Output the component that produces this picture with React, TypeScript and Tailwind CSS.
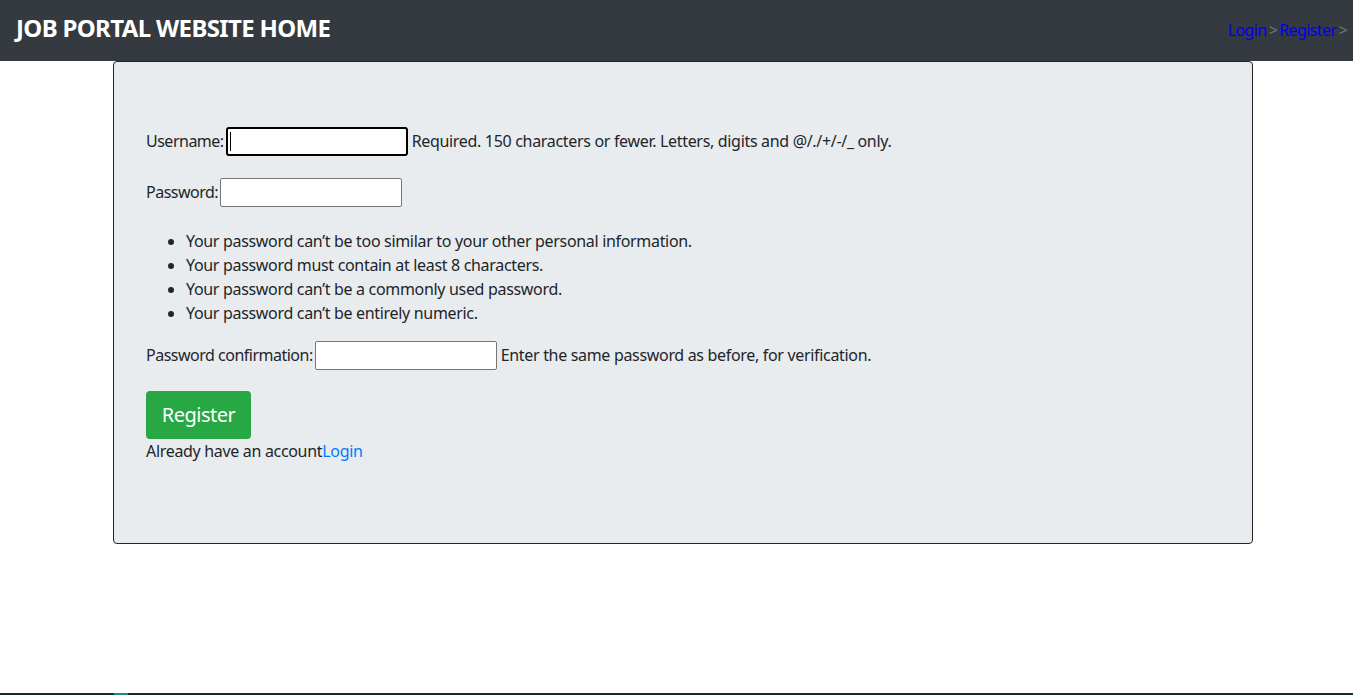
export default function App() {
  const font = { fontFamily: '"Noto Sans", "Open Sans", sans-serif' };
  return (
    <div className="relative min-h-[695px] w-full bg-white text-[16px] tracking-[-0.32px] text-[#212529]" style={font}>
      <nav className="flex h-[61px] items-center justify-between bg-[#343a40] pl-4 pr-[6px]">
        <span className="pb-[5px] text-[24px] font-bold leading-none tracking-[-0.65px] text-white">JOB PORTAL WEBSITE HOME</span>
        <div className="flex items-center pb-[2px] text-[16px] tracking-[-0.6px] text-[#0000ee]">
          <a href="#">Login</a>
          <span className="px-[2px] text-[#6c757d]">&gt;</span>
          <a href="#">Register</a>
          <span className="pl-[2px] text-[#6c757d]">&gt;</span>
        </div>
      </nav>

      <div className="ml-[113px] h-[483px] w-[1140px] rounded border border-[#212529] bg-[#e9ecef] px-8 pt-16">
        <form>
          <div className="flex h-[30px] items-center gap-[2px]">
            <label className="tracking-[-0.5px]">Username:</label>
            <div className="flex h-[29px] w-[182px] items-center rounded-[3px] border-2 border-black bg-white pl-[2px]">
              <span className="h-[19px] w-px bg-black" />
            </div>
            <span className="pl-[2px]">Required. 150 characters or fewer. Letters, digits and @/./+/-/_ only.</span>
          </div>

          <div className="mt-[21px] flex h-[30px] items-center gap-[2px]">
            <label className="tracking-[-0.5px]">Password:</label>
            <input type="password" className="h-[29px] w-[182px] rounded-[2px] border border-[#767676] bg-white outline-none" />
          </div>

          <ul className="mt-[22px] list-disc pl-10 leading-[24px]">
            <li>Your password can’t be too similar to your other personal information.</li>
            <li>Your password must contain at least 8 characters.</li>
            <li>Your password can’t be a commonly used password.</li>
            <li>Your password can’t be entirely numeric.</li>
          </ul>

          <div className="mt-[15px] flex h-[30px] items-center gap-[2px]">
            <label className="tracking-[-0.5px]">Password confirmation:</label>
            <input type="password" className="h-[29px] w-[182px] rounded-[2px] border border-[#767676] bg-white outline-none" />
            <span className="pl-[2px]">Enter the same password as before, for verification.</span>
          </div>

          <button type="button" className="mt-[21px] h-[48px] w-[105px] rounded-[4px] bg-[#28a745] text-[20px] tracking-[-0.5px] text-white">
            Register
          </button>
        </form>
        <p className="leading-[24px]">
          Already have an account<a href="#" className="text-[#007bff]">Login</a>
        </p>
      </div>

      <div className="absolute bottom-0 left-0 flex h-[2px] w-full bg-[#0d3028]">
        <div className="ml-[114px] h-full w-[14px] bg-[#1a8a8a]" />
      </div>
    </div>
  );
}
